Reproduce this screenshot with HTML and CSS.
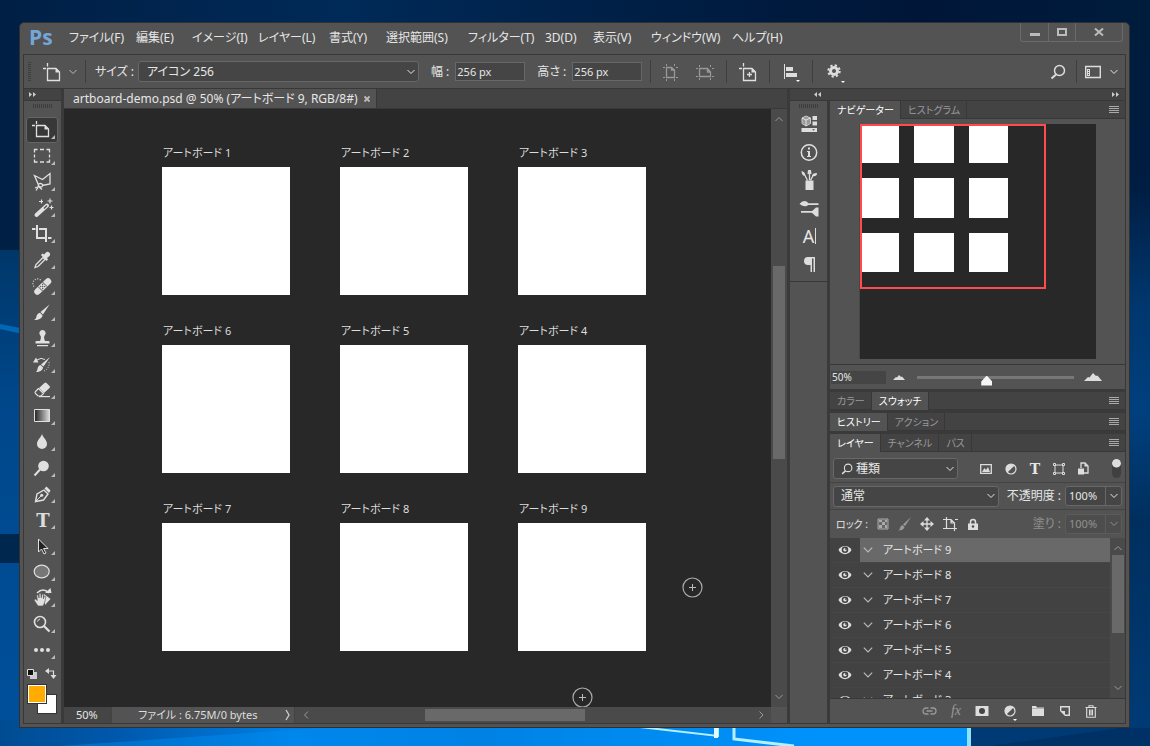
FILE: index.html
```html
<!DOCTYPE html>
<html lang="ja">
<head>
<meta charset="utf-8">
<title>artboard-demo.psd</title>
<link rel="stylesheet" href="styles.css">
</head>
<body>
<svg class="wallpaper" viewBox="0 0 1150 746" preserveAspectRatio="none" aria-hidden="true">
  <defs>
    <linearGradient id="w-top"><stop offset="0" stop-color="#001f45"/><stop offset=".3" stop-color="#002a58"/><stop offset=".6" stop-color="#001d42"/><stop offset=".8" stop-color="#001638"/><stop offset="1" stop-color="#001c3e"/></linearGradient>
    <linearGradient id="w-left" x2="0" y2="1"><stop offset="0" stop-color="#003769"/><stop offset=".3" stop-color="#00478a"/><stop offset="1" stop-color="#00509c"/></linearGradient>
    <linearGradient id="w-right" x2="0" y2="1"><stop offset="0" stop-color="#001c3c"/><stop offset=".25" stop-color="#001d42"/><stop offset=".4" stop-color="#00366c"/><stop offset=".55" stop-color="#00407e"/><stop offset=".7" stop-color="#002f5e"/><stop offset="1" stop-color="#003c78"/></linearGradient>
    <linearGradient id="w-bottom"><stop offset="0" stop-color="#004c92"/><stop offset=".12" stop-color="#0058ac"/><stop offset=".3" stop-color="#0080e4"/><stop offset=".5" stop-color="#0078d8"/><stop offset=".7" stop-color="#008af0"/><stop offset=".84" stop-color="#0092fc"/></linearGradient>
  </defs>
  <rect width="1150" height="746" fill="url(#w-top)"/>
  <rect y="250" width="100" height="496" fill="url(#w-left)"/>
  <path d="M0 324l40 8v6l-40-9z" fill="#0068b4"/>
  <rect y="534" width="30" height="29" fill="#00284f"/>
  <rect x="1100" width="50" height="746" fill="url(#w-right)"/>
  <rect y="720" width="970" height="26" fill="url(#w-bottom)"/>
  <path d="M60 746l260-18h340l60 12v6z" fill="#0090f8" opacity=".4"/>
  <path d="M640 727l78 9v-9" fill="none" stroke="#b4f0ff" stroke-width="2"/>
  <path d="M716 726v12" stroke="#e2fbff" stroke-width="4"/>
  <path d="M734 726v13l60 7" fill="none" stroke="#b4f0ff" stroke-width="3"/>
  <path d="M969 726v20" stroke="#8ee4ff" stroke-width="4"/>
  <path d="M971 726h179v20h-179z" fill="#003a74"/>
  <path d="M990 746l130-18h30v18z" fill="#002c5e" opacity=".6"/>
</svg>

<svg class="symbols" aria-hidden="true">
  <symbol id="chev-down" viewBox="0 0 10 10"><path d="M1.500 3l3.500 3.500 3.500-3.500" fill="none" stroke="currentColor"/></symbol>
  <symbol id="chev-up" viewBox="0 0 10 10"><path d="M1.500 7l3.500-3.500 3.500 3.500" fill="none" stroke="currentColor"/></symbol>
  <symbol id="chev-left" viewBox="0 0 10 10"><path d="M7 1.500l-3.500 3.500 3.500 3.500" fill="none" stroke="currentColor"/></symbol>
  <symbol id="chev-right" viewBox="0 0 10 10"><path d="M3.500 1.500l3.500 3.500-3.500 3.500" fill="none" stroke="currentColor"/></symbol>
  <symbol id="burger" viewBox="0 0 12 10"><path d="M1 1.500h10M1 3.500h10M1 5.500h10M1 7.500h10" stroke="#aaa" fill="none"/></symbol>
  <symbol id="eye" viewBox="0 0 14 10"><path d="M.5 5C3-.5 11-.5 13.500 5 11 10.500 3 10.500.5 5z" fill="#e0e0e0"/><circle cx="7" cy="4.800" r="3.300" fill="#424242"/><circle cx="7" cy="4.800" r="1.800" fill="#e0e0e0"/><circle cx="8" cy="4" r=".9" fill="#424242"/></symbol>
  <symbol id="board" viewBox="0 0 20 20"><path d="M5.500 1v3.500M1 6.500h3M5.500 6.500H14l3.500 3.500v8.500h-12z" fill="none" stroke="#e0e0e0" stroke-width="1.300"/><path d="M13.500 6l4.500 4.500h-4.500z" fill="#e0e0e0"/></symbol>
  <symbol id="half" viewBox="0 0 12 12"><circle cx="6" cy="6" r="5" fill="none" stroke="#ddd" stroke-width="1.200"/><path d="M9.600 2.400A5 5 0 0 0 2.400 9.600z" fill="#ddd"/></symbol>
  <symbol id="lens" viewBox="0 0 16 16"><circle cx="9.500" cy="6.500" r="5" fill="none" stroke="#ddd" stroke-width="1.500"/><path d="M6 10.500l-4.500 4" stroke="#ddd" stroke-width="2" fill="none"/></symbol>
  <symbol id="plus-ring" viewBox="0 0 22 22"><circle cx="11.500" cy="11.500" r="9.500" fill="none" stroke="#aaa" stroke-width="1.200"/><path d="M8 11.500h7M11.500 8v7" stroke="#bbb"/></symbol>
</svg>

<main class="window">
  <header class="titlebar">
    <span class="logo">Ps</span>
    <nav class="menus" aria-label="メニュー">
      <button>ファイル(F)</button><button>編集(E)</button><button>イメージ(I)</button><button>レイヤー(L)</button><button>書式(Y)</button><button>選択範囲(S)</button><button>フィルター(T)</button><button>3D(D)</button><button>表示(V)</button><button>ウィンドウ(W)</button><button>ヘルプ(H)</button>
    </nav>
    <div class="window-buttons">
      <button aria-label="最小化"><svg width="12" height="12"><path d="M1 8.500h10" stroke="#bbb" stroke-width="3"/></svg></button>
      <button aria-label="最大化"><svg width="12" height="12"><path d="M2 3h8v6H2z" fill="none" stroke="#bbb" stroke-width="2"/></svg></button>
      <button class="wide" aria-label="閉じる"><svg width="12" height="12"><path d="M2 2.500l8 7M10 2.500l-8 7" stroke="#bbb" stroke-width="2"/></svg></button>
    </div>
  </header>

  <div class="frame">
    <div class="options">
      <span class="grip-v"></span>
      <button class="opt-tool" aria-label="アートボードツール"><svg width="20" height="20"><use href="#board"/></svg><svg class="dim" width="10" height="10"><use href="#chev-down"/></svg></button>
      <span class="rule"></span>
      <label for="size" class="size-label">サイズ :</label>
      <span class="select size"><select id="size"><option>アイコン 256</option></select><svg width="10" height="10"><use href="#chev-down"/></svg></span>
      <label for="w" class="num-label">幅 :</label><input id="w" class="num" value="256 px">
      <label for="h" class="num-label">高さ :</label><input id="h" class="num" value="256 px">
      <span class="rule"></span>
      <button class="opt" aria-label="縦長"><svg width="18" height="18" fill="none" stroke="#999"><path d="M4.500 4v10.500h8V7l-3-2.500H4M9.500 4.500V7h3" stroke-width="1.300"/><path d="M4.500 1v2M12.500 1v2M4.500 16v2M12.500 16v2M1 4.500h2M14 4.500h2M1 14.500h2M14 14.500h2"/></svg></button>
      <button class="opt" aria-label="横長"><svg width="20" height="18" fill="none" stroke="#999"><path d="M4.500 5.500v8h11V9l-3-3.500H4M12.500 5.500V9h3" stroke-width="1.300"/><path d="M4.500 2v2M15.500 2v2M4.500 15v2M15.500 15v2M1 5.500h2M17 5.500h2M1 13.500h2M17 13.500h2"/></svg></button>
      <span class="rule"></span>
      <button class="opt" aria-label="新規アートボードを追加"><svg width="20" height="20"><use href="#board"/><path d="M9 12.500h5M11.500 10v5" stroke="#ddd" stroke-width="1.300"/></svg></button>
      <span class="rule"></span>
      <button class="opt" aria-label="整列"><svg width="20" height="20"><path d="M3.500 2v15" stroke="#ddd"/><path d="M5 5h7v4H5zM5 11h11v4H5z" fill="#ddd"/><path d="M15 18h4l-2 2z" fill="#fff"/></svg></button>
      <span class="rule"></span>
      <button class="opt gear" aria-label="設定"><svg width="22" height="22"><circle cx="9" cy="10" r="3.500" fill="none" stroke="#ddd" stroke-width="3"/><circle cx="9" cy="10" r="5.700" fill="none" stroke="#ddd" stroke-width="2" stroke-dasharray="2.240 2.240"/><path d="M16 20h4l-2 2z" fill="#fff"/></svg></button>
      <button class="opt search" aria-label="検索"><svg width="16" height="16"><use href="#lens"/></svg></button>
      <span class="rule"></span>
      <button class="opt space" aria-label="ワークスペース"><svg width="16" height="14"><path d="M.7 1.500h14.600v11H.7z" fill="none" stroke="#ddd" stroke-width="1.400"/><path d="M2 4h3v7H2z" fill="#ddd"/><path d="M3.500 5v5" stroke="#535353" stroke-dasharray="1 1"/></svg><svg width="10" height="10"><use href="#chev-down"/></svg></button>
    </div>

    <div class="work">
      <aside class="toolbox">
        <button class="dock-head" aria-label="展開"><svg width="9" height="7"><path d="M1 1l3 2.500L1 6zM5 1l3 2.500L5 6z" fill="#ccc"/></svg></button>
        <span class="grip-h"></span>
        <div class="tools">
          <button class="active" aria-label="アートボード"><svg viewBox="0 0 32 26"><path d="M10.500 4v3M6 8.500h3M10.500 8.500h8.500l3.500 3.500v7.500h-12z" fill="none" stroke="#e0e0e0" stroke-width="1.300"/><path d="M18.500 8l4.500 4.500h-4.500z"/></svg></button>
          <button aria-label="長方形選択"><svg viewBox="0 0 32 26"><path d="M8.500 9.500v-3h3M14 6.500h4M20.500 6.500h3v3M23.500 11.500v3M23.500 16.500v2.500h-3M18 19h-4M11.500 19h-3v-2.500M8.500 14.500v-3" fill="none" stroke="#e0e0e0" stroke-width="1.300"/></svg></button>
          <button aria-label="多角形選択"><svg viewBox="0 0 32 26"><path d="M12.500 16L8.500 6.500l8 4L24 4.500v10.500l-8 1.500M13 17.500a2 1.500 0 1 0 3-2.500 2 1.500 0 1 0-3 2.500M12 17l4 3.500M14 17l-5 2M12 18.500l-2 3" fill="none" stroke="#e0e0e0" stroke-width="1.300"/></svg></button>
          <button aria-label="自動選択"><svg viewBox="0 0 32 26"><path d="M10.500 20L21 10.500" stroke="#e0e0e0" stroke-width="4" stroke-linecap="round"/><path d="M18 13.500l3-3" stroke="#535353" stroke-width="1.500"/><path d="M13 6.500h4M15.500 4.500v4M21.500 6h5M24 3.500v5M23.500 12.500h4M25.500 10.500v4" stroke="#e0e0e0" stroke-width="1.200"/></svg></button>
          <button aria-label="切り抜き"><svg viewBox="0 0 32 26"><path d="M6 8h3.500M11 4v13h9M22 17h3.500M13 8h7v13" fill="none" stroke="#e0e0e0" stroke-width="2"/></svg></button>
          <button aria-label="スポイト"><svg viewBox="0 0 32 26"><path d="M9 20.500l1-3 7-7 2 2-7 7z" fill="none" stroke="#e0e0e0" stroke-width="1.300"/><path d="M15 8l1.500-1.500 1.500 1L20 5.500c2-2 5.500 1 3.500 3.500l-2.500 2 1 1.500-1.500 1.500z"/></svg></button>
          <button aria-label="修復ブラシ"><svg viewBox="0 0 32 26"><path d="M11.500 18.500L22 8.500" stroke="#e0e0e0" stroke-width="6.500" stroke-linecap="round"/><path d="M12 13.500l4.500 4.500M16.500 9l4.500 4.500" stroke="#535353"/><path d="M14.700 13.500h.01M16.700 15.500h.01M16.700 11.500h.01M18.700 13.500h.01M16.700 13.500h.01" stroke="#535353" stroke-width="1.400" stroke-linecap="round"/><path d="M8 13.500a4.500 4.500 0 1 1 7-6" fill="none" stroke="#e0e0e0" stroke-width="1.200" stroke-dasharray="1 1.500"/></svg></button>
          <button aria-label="ブラシ"><svg viewBox="0 0 32 26"><path d="M23.500 5.500l-6.500 10-2.500-2.500zM14 13.700l2.500 2.500c0 3-4 5-8.500 4.800 2.500-1.500 2-2.500 3-5 .8-1.500 2-2 3-2.300z"/></svg></button>
          <button aria-label="スタンプ"><svg viewBox="0 0 32 26"><path d="M16.500 5a3.200 3.200 0 0 1 2.200 5.500c-1 1-.7 3 .3 5.500h3.500q1 0 1 1v1.500h-14V17q0-1 1-1H14c1-2.500 1.300-4.500.3-5.500A3.200 3.200 0 0 1 16.500 5zM11 20h11v1.200H11z"/></svg></button>
          <button aria-label="ヒストリーブラシ"><svg viewBox="0 0 32 26"><path d="M24 6l-6.500 9.500-2.500-2zM14.500 14l2.500 2.200c0 3-3 4.800-7 4.800 2-2 1-2.500 2-4.800.5-1.200 1.500-2 2.500-2.200zM7 11.500l3-5 2.500 5z"/><path d="M11 9q4-3 8-.5" fill="none" stroke="#e0e0e0"/><path d="M23 11q1 6-5 9" fill="none" stroke="#e0e0e0" stroke-dasharray="1 1.500"/></svg></button>
          <button aria-label="消しゴム"><svg viewBox="0 0 32 26"><path d="M13 11l5.500-5q1-1 2 0l3 3q1 1 0 2L18 16z"/><path d="M12.500 11.500l-3 3q-1 1 0 2l2.500 2.500h3l2.500-2.500z" fill="none" stroke="#e0e0e0" stroke-width="1.200"/><path d="M13 19h11v1.200H13z"/></svg></button>
          <button aria-label="グラデーション"><svg viewBox="0 0 32 26"><defs><linearGradient id="gr"><stop stop-color="#222"/><stop offset="1" stop-color="#ddd"/></linearGradient></defs><path d="M8.500 6.500h15v12h-15z" fill="url(#gr)" stroke="#e0e0e0"/></svg></button>
          <button aria-label="ぼかし"><svg viewBox="0 0 32 26"><path d="M16 5c1 3.500 5 6 5 10a5 5 0 0 1-10 0c0-4 4-6.500 5-10z"/></svg></button>
          <button aria-label="覆い焼き"><svg viewBox="0 0 32 26"><circle cx="17.500" cy="11" r="5.300"/><path d="M14 14.500l-5.500 6" stroke="#e0e0e0" stroke-width="2"/></svg></button>
          <button aria-label="ペン"><svg viewBox="0 0 32 26"><path d="M9.500 20.500l1.500-7.500 7-4 4 4-4.500 6z" fill="none" stroke="#e0e0e0" stroke-width="1.400"/><path d="M9.500 20.500l6-6" stroke="#e0e0e0"/><circle cx="15.700" cy="14.300" r="1.500"/><path d="M18.500 7.500l2-2 4 4-1.500 2.500z"/></svg></button>
          <button aria-label="文字"><svg viewBox="0 0 32 26"><text class="serif" x="17" y="20" text-anchor="middle" font-size="18">T</text></svg></button>
          <button aria-label="パス選択"><svg viewBox="0 0 32 26"><path d="M12.500 6v13l3-3 2.500 5 2-1-2.500-4.500h4.500z" fill="#222" stroke="#e0e0e0"/></svg></button>
          <button aria-label="楕円形"><svg viewBox="0 0 32 26"><ellipse cx="15.700" cy="12.500" rx="7.500" ry="6.300" fill="#777" stroke="#e0e0e0" stroke-width="1.200"/></svg></button>
          <button aria-label="回転ビュー"><svg viewBox="0 0 32 26"><path d="M11 8q6-6 12 0" fill="none" stroke="#e0e0e0" stroke-width="1.500"/><path d="M19 8h6.500l-1-5zM18 9l6.500 5-5.500 6z"/><path d="M12 21l-4-6 1.500-1 1.800 1.500-.6-5.500 1.500-.3.900 3.300V8.500l1.700-.2.400 4.500 1-4 1.400.4-.3 4.600 1.300-2.800 1.300.5-1.200 6-1.700 3.500z" stroke="#535353" stroke-width=".6"/></svg></button>
          <button aria-label="ズーム"><svg viewBox="0 0 32 26"><circle cx="14" cy="11" r="5.500" fill="none" stroke="#e0e0e0" stroke-width="1.600"/><path d="M11.500 10.500q.5-2 2.500-2.500" fill="none" stroke="#e0e0e0"/><path d="M18 15l5.500 5.500" stroke="#e0e0e0" stroke-width="2.200"/></svg></button>
          <button aria-label="その他"><svg viewBox="0 0 32 26"><circle cx="10" cy="13" r="2"/><circle cx="16" cy="13" r="2"/><circle cx="22" cy="13" r="2"/></svg></button>
        </div>
        <div class="swatch-tools">
          <button aria-label="初期設定の色"><svg width="10" height="10"><path d="M3 3h7v7H3z" fill="#ccc"/><path d="M.5.5h6v6h-6z" fill="#111" stroke="#ddd"/></svg></button>
          <button aria-label="色を入れ替え"><svg width="12" height="11"><path d="M3 3h5.500v5" fill="none" stroke="#ddd" stroke-width="1.200"/><path d="M4 0v6L0 3zM5.500 7h6l-3 4z" fill="#ddd"/></svg></button>
        </div>
        <div class="colors"><button class="bg" aria-label="背景色"></button><button class="fg" aria-label="描画色"></button></div>
      </aside>

      <section class="document">
        <div class="doc-tabs"><div class="doc-tab"><span>artboard-demo.psd @ 50% (アートボード 9, RGB/8#)</span><button aria-label="閉じる"><svg width="8" height="8"><path d="M1.500 1.500l5 5M6.500 1.500l-5 5" stroke="#bbb" stroke-width="1.800"/></svg></button></div></div>
        <div class="view">
          <div class="canvas">
            <figure><figcaption>アートボード 1</figcaption><div></div></figure>
            <figure><figcaption>アートボード 2</figcaption><div></div></figure>
            <figure><figcaption>アートボード 3</figcaption><div></div></figure>
            <figure><figcaption>アートボード 6</figcaption><div></div></figure>
            <figure><figcaption>アートボード 5</figcaption><div></div></figure>
            <figure><figcaption>アートボード 4</figcaption><div></div></figure>
            <figure><figcaption>アートボード 7</figcaption><div></div></figure>
            <figure><figcaption>アートボード 8</figcaption><div></div></figure>
            <figure><figcaption>アートボード 9</figcaption><div></div></figure>
            <button class="add add-right" aria-label="右に追加"><svg width="22" height="22"><use href="#plus-ring"/></svg></button>
            <button class="add add-below" aria-label="下に追加"><svg width="22" height="22"><use href="#plus-ring"/></svg></button>
          </div>
          <div class="scroll-v"><svg width="10" height="10"><use href="#chev-up"/></svg><span class="track"><i></i></span><svg width="10" height="10"><use href="#chev-down"/></svg></div>
        </div>
        <footer class="status">
          <input class="status-zoom" aria-label="ズーム" value="50%">
          <button class="status-info"><span>ファイル : 6.75M/0 bytes</span><svg width="10" height="12"><path d="M3 1l3 5-3 5" fill="none" stroke="#ccc" stroke-width="1.300"/></svg></button>
          <div class="scroll-h"><svg width="10" height="10"><use href="#chev-left"/></svg><span class="track"><i></i></span><svg width="10" height="10"><use href="#chev-right"/></svg></div>
          <span class="corner"></span>
        </footer>
      </section>

      <section class="dock">
        <div class="dock-bar">
          <button aria-label="パネルを展開"><svg width="9" height="7"><path d="M4 1L1 3.500 4 6zM8 1L5 3.500 8 6z" fill="#ccc"/></svg></button>
          <button aria-label="アイコン化"><svg width="9" height="7"><path d="M1 1l3 2.500L1 6zM5 1l3 2.500L5 6z" fill="#ccc"/></svg></button>
        </div>
        <div class="dock-body">
          <aside class="strip">
            <span class="grip-h"></span>
            <div class="strip-icons">
              <button aria-label="ライブラリ"><svg viewBox="0 0 28 28"><path d="M6 8l4-2 4.500 2v5.500L10 16l-4-2.500z" fill="#999" stroke="#ccc"/><path d="M6 8l4 2 4.500-2M10 10v6" fill="none" stroke="#e0e0e0"/><path d="M16.500 6h4.500v4h-4.500zM16.500 11.500h4.500v4h-4.500zM5.500 18h15.500v4H5.500z"/><path d="M16 19.300h3l-1.500 1.500z" fill="#535353"/></svg></button>
              <button aria-label="情報"><svg viewBox="0 0 28 28"><circle cx="13" cy="14.500" r="7.700" fill="none" stroke="#e0e0e0" stroke-width="1.500"/><path d="M12 9.500h2v2h-2zM11 13h3v5h1v1h-4v-1h1v-4h-1z"/></svg></button>
              <button aria-label="ブラシプリセット"><svg viewBox="0 0 28 28"><path d="M9.500 14.500h8V24h-8zM5.500 5q4 1 4 5-4 0-4-5zM12 4h3l.5 4h-4zM16 10q0-3 5-3 0 4-5 3z"/><path d="M9 9.500l2.500 5M13.500 8v6M17 9.500l-2.500 5" stroke="#e0e0e0" stroke-width="1.300"/></svg></button>
              <button aria-label="ブラシ設定"><svg viewBox="0 0 28 28"><path d="M3.500 10q3-4 7-2.500 2 1 2 2.500t-2 2q-3 1-7-2z"/><path d="M12 9.200h10.500v1.700H12zM5 17h11v1.700H5zM15 18l5-4.500h2.500v9H20z"/></svg></button>
              <button class="letter" aria-label="文字パネル"><span>A</span><svg width="3" height="16"><path d="M1.500 0v16" stroke="#ddd"/></svg></button>
              <button aria-label="段落"><svg viewBox="0 0 28 28"><path d="M12 7h7v15h-1.500V8.500H16V22h-1.500v-7H12a4 4 0 0 1 0-8z"/></svg></button>
            </div>
          </aside>

          <div class="panels">
            <section class="panel navigator">
              <div class="tabs"><button class="on">ナビゲーター</button><button>ヒストグラム</button><button class="burger" aria-label="メニュー"><svg width="12" height="10"><use href="#burger"/></svg></button></div>
              <div class="nav-view">
                <svg viewBox="0 0 236 235" role="img" aria-label="ナビゲーター"><path d="M0 0h236v235H0z" fill="#282828"/><path d="M2 2h37v37H2zM54 2h40v37H54zM109 2h39v37h-39zM2 54h37v40H2zM54 54h40v40H54zM109 54h39v40h-39zM2 109h37v39H2zM54 109h40v39H54zM109 109h39v39h-39z" fill="#fff"/><path d="M1 1h184v163H1z" fill="none" stroke="#ff4b4b" stroke-width="2"/></svg>
              </div>
              <div class="nav-zoom">
                <input class="nav-value" aria-label="表示倍率" value="50%">
                <svg width="12" height="8"><path d="M0 7l3-3 1 .5L6 2l2 2 1-.5L12 7z" fill="#ddd"/></svg>
                <input type="range" min="0" max="100" value="44" aria-label="ズームスライダー">
                <svg width="18" height="10"><path d="M0 9l4-4 1.500.5L9 1l3 3 1.500-.5L18 9z" fill="#ddd"/></svg>
              </div>
            </section>
            <section class="panel"><div class="tabs"><button>カラー</button><button class="on">スウォッチ</button><button class="burger" aria-label="メニュー"><svg width="12" height="10"><use href="#burger"/></svg></button></div></section>
            <section class="panel"><div class="tabs"><button class="on">ヒストリー</button><button>アクション</button><button class="burger" aria-label="メニュー"><svg width="12" height="10"><use href="#burger"/></svg></button></div></section>
            <section class="panel layers">
              <div class="tabs"><button class="on">レイヤー</button><button>チャンネル</button><button>パス</button><button class="burger" aria-label="メニュー"><svg width="12" height="10"><use href="#burger"/></svg></button></div>
              <div class="row filter-row">
                <span class="select kind"><svg class="lead" width="12" height="12"><use href="#lens"/></svg><select aria-label="種類"><option>種類</option></select><svg width="10" height="10"><use href="#chev-down"/></svg></span>
                <div class="filters">
                  <button aria-label="ピクセル"><svg width="14" height="12"><path d="M1.700 1.700h10.600v8.600H1.700z" fill="none" stroke="#ddd" stroke-width="1.300"/><path d="M3 9l2.500-4L7 7l2-3 2 5z" fill="#ddd"/></svg></button>
                  <button aria-label="調整"><svg width="12" height="12"><use href="#half"/></svg></button>
                  <button class="type-filter serif" aria-label="テキスト">T</button>
                  <button aria-label="シェイプ"><svg width="12" height="12" fill="none" stroke="#ddd"><path d="M2 2h8v8H2z"/><path d="M.5.5h2v2h-2zM9.500.5h2v2h-2zM.5 9.500h2v2h-2zM9.500 9.500h2v2h-2z" fill="#535353"/></svg></button>
                  <button aria-label="スマートオブジェクト"><svg width="12" height="13"><path d="M4 6V1h4l3 3v7H7" fill="none" stroke="#ddd" stroke-width="1.300"/><path d="M7.500 1v3.500H11zM1 6.500h6v6H1z" fill="#ddd"/></svg></button>
                </div>
                <label class="switch"><input type="checkbox" aria-label="フィルター" checked></label>
              </div>
              <div class="row">
                <span class="select blend"><select aria-label="描画モード"><option>通常</option></select><svg width="10" height="10"><use href="#chev-down"/></svg></span>
                <label for="op" class="end">不透明度 :</label>
                <span class="combo"><input id="op" value="100%"><button aria-label="不透明度"><svg width="10" height="10"><use href="#chev-down"/></svg></button></span>
              </div>
              <div class="row lock-row">
                <span class="lock-label">ロック :</span>
                <button aria-label="透明ピクセル"><svg width="12" height="12"><path d="M1 1h10v10H1z" fill="#666" stroke="#aaa"/><path d="M2 2h3v2H2zM8 2h2v2H8zM5 4h3v3H5zM2 7h3v3H2zM8 7h2v3H8z" fill="#aaa"/></svg></button>
                <button aria-label="画像ピクセル"><svg width="13" height="14"><path d="M13 0L7 9 5 7.500zM4.500 8l2 2c-.5 2.500-3 3.500-6 3.500C2 12 2 11 2.500 9.500z" fill="#999"/></svg></button>
                <button aria-label="位置"><svg width="14" height="14"><path d="M7 2v10M2 7h10" stroke="#ddd" stroke-width="1.300"/><path d="M7 0l3 3.500H4zM7 14l3-3.500H4zM0 7l3.500-3v6zM14 7l-3.500-3v6z" fill="#ddd"/></svg></button>
                <button aria-label="自動ネスト"><svg width="15" height="14" fill="none" stroke="#ddd"><path d="M3.500 2.500v9h8V6L8 2.500zM8 2.500V6h3.500M3.500 0v2M0 2.500h3M12 2.500h3M0 11.500h3M11.500 12v2M12 11.500h2" stroke-width="1.200"/></svg></button>
                <button aria-label="すべて"><svg width="12" height="13"><path d="M3.500 6V4a2.500 2.500 0 0 1 5 0v2" fill="none" stroke="#ddd" stroke-width="1.500"/><path d="M1 5.500h10V12H1z" fill="#ddd"/><circle cx="6" cy="8.500" r="1.200" fill="#444"/></svg></button>
                <label for="fill" class="end disabled">塗り :</label>
                <span class="combo disabled"><input id="fill" value="100%" disabled><button disabled aria-label="塗り"><svg width="10" height="10"><use href="#chev-down"/></svg></button></span>
              </div>
              <div class="layer-view">
                <ul class="layer-list">
                  <li class="selected"><button aria-label="表示"><svg width="14" height="10"><use href="#eye"/></svg></button><span class="layer"><svg width="12" height="12"><use href="#chev-down"/></svg>アートボード 9</span></li>
                  <li><button aria-label="表示"><svg width="14" height="10"><use href="#eye"/></svg></button><span class="layer"><svg width="12" height="12"><use href="#chev-down"/></svg>アートボード 8</span></li>
                  <li><button aria-label="表示"><svg width="14" height="10"><use href="#eye"/></svg></button><span class="layer"><svg width="12" height="12"><use href="#chev-down"/></svg>アートボード 7</span></li>
                  <li><button aria-label="表示"><svg width="14" height="10"><use href="#eye"/></svg></button><span class="layer"><svg width="12" height="12"><use href="#chev-down"/></svg>アートボード 6</span></li>
                  <li><button aria-label="表示"><svg width="14" height="10"><use href="#eye"/></svg></button><span class="layer"><svg width="12" height="12"><use href="#chev-down"/></svg>アートボード 5</span></li>
                  <li><button aria-label="表示"><svg width="14" height="10"><use href="#eye"/></svg></button><span class="layer"><svg width="12" height="12"><use href="#chev-down"/></svg>アートボード 4</span></li>
                  <li><button aria-label="表示"><svg width="14" height="10"><use href="#eye"/></svg></button><span class="layer"><svg width="12" height="12"><use href="#chev-down"/></svg>アートボード 3</span></li>
                </ul>
                <div class="scroll-v"><svg width="10" height="10"><use href="#chev-up"/></svg><span class="track"><i></i></span><svg width="10" height="10"><use href="#chev-down"/></svg></div>
              </div>
              <div class="layer-actions">
                <button aria-label="リンク"><svg width="15" height="10" fill="none" stroke="#999" stroke-width="1.300"><path d="M6.500 2H4a3 3 0 0 0 0 6h2.500M8.500 2H11a3 3 0 0 1 0 6H8.500M4.500 5h6"/></svg></button>
                <button class="fx">fx</button>
                <button aria-label="マスク"><svg width="14" height="12"><path d="M.5 1h13v10H.5z" fill="#ddd"/><circle cx="7" cy="6" r="3" fill="#444"/></svg></button>
                <button class="adjust" aria-label="調整レイヤー"><svg width="14" height="20"><use href="#half" x="1" y="4" width="12" height="12"/><path d="M10 18h4l-2 2z" fill="#fff"/></svg></button>
                <button aria-label="グループ"><svg width="14" height="12"><path d="M1 1h4l1 1.500h7V11H1z" fill="#ddd"/><path d="M1 3.500h12" stroke="#888" stroke-width=".5"/></svg></button>
                <button aria-label="新規"><svg width="12" height="12"><path d="M1.700 6V1.700h8.600v8.600H6" fill="none" stroke="#ddd" stroke-width="1.400"/><path d="M1 6h5v5z" fill="#ddd"/></svg></button>
                <button aria-label="削除"><svg width="12" height="13" fill="none" stroke="#ddd"><path d="M.5 2.500h11M4 2V.7h4V2M1.700 3v9.300h8.600V3M4.500 4.500v6M6 4.500v6M7.500 4.500v6" stroke-width="1.100"/></svg></button>
              </div>
            </section>
          </div>
        </div>
      </section>
    </div>
  </div>
</main>
</body>
</html>
```
FILE: styles.css
```css
* { box-sizing: border-box; }

body {
  margin: 0;
  height: 100vh;
  padding: 22px 20px 18px 19px;
  overflow: hidden;
  background: #001f45;
  color: #e6e6e6;
  font: 12px/16px "Noto Sans", "Noto Sans CJK JP", sans-serif;
  font-feature-settings: "palt";
}

.wallpaper {
  position: absolute;
  inset: 0;
  width: 100%;
  height: 100%;
  z-index: -1;
}

.symbols { position: absolute; width: 0; height: 0; }

svg { display: block; flex: none; }
.serif { font-family: "DejaVu Serif", serif; font-weight: bold; fill: #ddd; }

button, input, select {
  margin: 0;
  padding: 0;
  border: 0;
  border-radius: 0;
  background: none;
  color: inherit;
  font: inherit;
  font-feature-settings: inherit;
  white-space: nowrap;
  outline: 0;
}

button { display: flex; align-items: center; justify-content: center; }

.window {
  display: flex;
  flex-direction: column;
  height: 100%;
  padding: 0 3px 3px;
  border: 1px solid #303030;
  border-radius: 5px 5px 0 0;
  background: #535353;
}

/* title bar */
.titlebar { display: flex; height: 31px; flex: none; }
.logo {
  width: 46px;
  padding: 0 0 0 6px;
  color: #75a6d8;
  font: bold 21px/29px "Open Sans", sans-serif;
}
.menus {
  display: grid;
  grid-template-columns: 67px 56px 66px 71px 57px 82px 77px 48px 58px 81px auto;
  height: 30px;
  font-size: 12px;
}
.menus button { justify-content: flex-start; }
.window-buttons {
  display: flex;
  height: 19px;
  margin: 0 3px 0 auto;
  border: 1px solid #6a6a6a;
  border-top: 0;
  border-radius: 0 0 3px 3px;
}
.window-buttons button { width: 27px; }
.window-buttons button + button { border-left: 1px solid #6a6a6a; }
.window-buttons .wide { width: 47px; }

.frame {
  display: flex;
  flex-direction: column;
  flex: 1;
  min-height: 0;
  border: 1px solid #383838;
}

/* options bar */
.options {
  display: flex;
  align-items: center;
  flex: none;
  height: 34px;
  padding: 0 6px 0 4px;
  border-bottom: 1px solid #383838;
}
.grip-v {
  width: 3px;
  height: 19px;
  background: repeating-linear-gradient(#3d3d3d 0 1px, #535353 1px 2px);
}
.opt-tool { gap: 6px; margin: 0 7px 0 11px; color: #bbb; }
.rule { width: 1px; height: 23px; background: #3e3e3e; }
.size-label { margin: 0 4px 0 9px; }
.select {
  position: relative;
  display: flex;
  align-items: center;
  height: 21px;
  padding-right: 2px;
  border: 1px solid #686868;
  border-radius: 3px;
  background: #454545;
}
.select select { flex: 1; min-width: 0; height: 100%; padding-left: 8px; appearance: none; }
.size { flex: 0 1 281px; }
.num-label { margin: 0 6px 0 12px; }
.num {
  width: 70px;
  height: 19px;
  padding: 0 1px;
  border: 1px solid #686868;
  background: #454545;
  font-size: 11px;
}
.num + .rule { margin-left: 8px; }
.opt { margin: 0 11px; }
.opt + .opt { margin-left: 4px; }
.options .gear { margin: 0 0 0 12px; }
.options .search { margin: 0 10px 0 auto; }
.options .space { gap: 8px; margin: 0 0 0 8px; }

.work {
  display: grid;
  grid-template-columns: 37px minmax(0, 1fr) 335px;
  grid-template-rows: minmax(0, 1fr);
  gap: 3px;
  flex: 1;
  min-height: 0;
  background: #3a3a3a;
}

/* toolbox */
.toolbox { display: flex; flex-direction: column; background: #535353; }
.dock-head {
  justify-content: flex-start;
  flex: none;
  height: 12px;
  padding-left: 4px;
  border-bottom: 1px solid #383838;
  background: #434343;
}
.grip-h {
  flex: none;
  width: 19px;
  height: 4px;
  margin: 3px auto 9px;
  background: repeating-linear-gradient(90deg, #3d3d3d 0 1px, #535353 1px 2px);
}
.tools { display: flex; flex-direction: column; padding-left: 2px; }
.tools button { position: relative; width: 32px; height: 26px; border-radius: 3px; }
.tools svg { width: 32px; height: 26px; fill: #e0e0e0; }
.tools button::after {
  content: "";
  position: absolute;
  right: 3px;
  bottom: 4px;
  width: 4px;
  height: 4px;
  background: #bbb;
  clip-path: polygon(100% 0, 100% 100%, 0 100%);
}
.tools .active { background: #383838; box-shadow: inset 0 0 0 1px #656565; }
.swatch-tools { display: flex; gap: 8px; padding: 5px 0 4px 3px; }
.colors { position: relative; height: 34px; margin-left: 3px; }
.colors button {
  position: absolute;
  width: 20px;
  height: 20px;
  border: 1px solid #333;
  background: #fff;
}
.colors .bg { left: 10px; top: 11px; }
.colors .fg { left: 0; top: 1px; background: #ffab00; box-shadow: inset 0 0 0 1px #fff; }

/* document */
.document { display: flex; flex-direction: column; min-width: 0; }
.doc-tabs {
  display: flex;
  flex: none;
  height: 20px;
  border-bottom: 1px solid #383838;
  background: #434343;
}
.doc-tab {
  display: flex;
  align-items: center;
  gap: 5px;
  padding: 0 5px 0 9px;
  border-right: 1px solid #383838;
  background: #535353;
}
.view { display: flex; flex: 1; min-height: 0; }
.canvas {
  position: relative;
  display: grid;
  grid-template-columns: repeat(3, 128px);
  align-content: start;
  gap: 26px 50px;
  flex: 1;
  min-width: 0;
  padding: 34px 0 0 98px;
  overflow: hidden;
  background: #282828;
}
figure { margin: 0; }
figcaption { height: 24px; padding-left: 1px; color: #ddd; font-size: 11px; line-height: 20px; }
figure div { height: 128px; background: #fff; }
.add { position: absolute; }
.add-right { left: 617px; top: 467px; }
.add-below { left: 507px; top: 577px; }

.scroll-v {
  display: flex;
  flex-direction: column;
  align-items: center;
  flex: none;
  width: 16px;
  padding: 5px 0;
  background: #4a4a4a;
  color: #999;
}
.track { display: flex; flex: 1; }
.scroll-v .track { flex-direction: column; width: 12px; }
.track i { background: #696969; }
.view .track i { height: 34%; margin-top: 142px; }

.status { display: flex; flex: none; height: 16px; background: #4a4a4a; font-size: 11px; }
.status-zoom { width: 47px; padding-left: 12px; background: #454545; }
.status-info {
  justify-content: space-between;
  width: 184px;
  padding: 0 1px 0 26px;
  border: solid #434343;
  border-width: 0 1px;
  background: #535353;
  color: #ddd;
}
.scroll-h { display: flex; align-items: center; flex: 1; padding: 0 5px 0 6px; color: #999; }
.scroll-h .track { height: 12px; }
.scroll-h i { width: 36%; margin-left: 114px; }
.corner { width: 16px; background: #535353; }

/* dock */
.dock { display: flex; flex-direction: column; min-width: 0; }
.dock-bar {
  display: flex;
  align-items: center;
  justify-content: space-between;
  flex: none;
  height: 12px;
  padding: 0 5px 0 23px;
  border-bottom: 1px solid #383838;
  background: #434343;
}
.dock-body {
  display: grid;
  grid-template-columns: 37px minmax(0, 1fr);
  grid-template-rows: minmax(0, 1fr);
  gap: 3px;
  flex: 1;
  min-height: 0;
}
.strip { background: #535353; }
.strip .grip-h { display: block; margin: 3px auto 0; }
.strip-icons { display: flex; flex-direction: column; padding: 2px 0 3px 6px; border-bottom: 1px solid #383838; }
.strip-icons button { width: 28px; height: 28px; }
.strip-icons svg { width: 28px; fill: #ddd; }
.strip-icons .letter { font-size: 18px; }
.strip-icons .letter svg { width: 3px; }

.panels { display: flex; flex-direction: column; gap: 3px; min-width: 0; }
.panel { background: #535353; }
.tabs {
  display: flex;
  height: 18px;
  border-bottom: 1px solid #383838;
  background: #434343;
  color: #999;
  font-size: 10px;
}
.tabs button { padding: 0 6px 0 7px; border-right: 1px solid #383838; }
.tabs .on { height: 18px; background: #535353; color: #fff; }
.tabs .burger { margin-left: auto; padding: 0 5px; border: 0; }

.nav-view { padding: 5px 29px; }
.nav-view svg { width: 100%; border: solid #474747; border-width: 0 0 0 1px; }
.nav-zoom {
  display: flex;
  align-items: center;
  height: 25px;
  padding-left: 1px;
  border-top: 1px solid #383838;
}
.nav-value { width: 55px; height: 13px; margin-right: 7px; padding-left: 1px; background: #454545; font-size: 10px; line-height: 13px; }
.nav-zoom input[type="range"] {
  flex: 1;
  min-width: 0;
  height: 16px;
  margin: 0 10px 0 12px;
  appearance: none;
}
.nav-zoom input::-webkit-slider-runnable-track { height: 3px; background: #777; }
.nav-zoom input::-webkit-slider-thumb {
  appearance: none;
  width: 11px;
  height: 10px;
  background: #f5f5f5;
  clip-path: polygon(50% 0, 100% 60%, 100% 100%, 0 100%, 0 60%);
}
.nav-zoom svg:last-child { margin-right: 23px; }

.layers { display: flex; flex-direction: column; flex: 1; min-height: 0; }
.row {
  display: flex;
  align-items: center;
  flex: none;
  height: 27px;
  padding: 0 3px;
  border-top: 1px solid #444;
}
.filter-row { height: 30px; padding-top: 3px; border: 0; }
.kind { width: 125px; }
.kind .lead { margin-left: 7px; }
.select.kind select { padding-left: 3px; }
.filters { display: flex; align-items: center; gap: 12px; margin-left: 21px; }
.type-filter { width: 12px; font-size: 14px; line-height: 18px; }
.switch { margin-left: auto; }
.switch input {
  display: block;
  width: 9px;
  height: 19px;
  margin-right: 1px;
  appearance: none;
  border-radius: 5px;
  background: radial-gradient(circle at 50% 4px, #ddd 4px, #404040 5px);
}
.blend { width: 166px; }
.select.blend select { padding-left: 7px; }
.end { margin: 0 4px 0 auto; }
.combo {
  display: flex;
  width: 57px;
  height: 20px;
  border: 1px solid #686868;
  border-radius: 3px;
  background: #454545;
}
.combo input { width: 39px; padding-left: 3px; font-size: 11px; }
.combo button { flex: 1; border-left: 1px solid #686868; }
.disabled { opacity: 0.4; }
.lock-row { height: 29px; gap: 9px; }
.lock-label { margin-left: 3px; font-size: 10px; }
.lock-row .end { margin-right: 0; }
.lock-row .combo { margin-left: -5px; }

.layer-view { display: flex; flex: 1; min-height: 0; background: #424242; }
.layer-list { flex: 1; margin: 0; padding: 0; overflow: hidden; list-style: none; }
.layer-list li { display: flex; height: 25px; border-bottom: 1px solid #464646; }
.layer-list button { width: 30px; }
.layer { display: flex; align-items: center; gap: 9px; flex: 1; padding-left: 2px; font-size: 11px; }
.layer svg { color: #bbb; }
.selected .layer { background: #696969; }
.layer-view .scroll-v { width: 15px; }
.layer-view .track i { height: 60%; margin-top: 2px; }

.layer-actions {
  display: flex;
  align-items: center;
  justify-content: flex-end;
  gap: 14px;
  flex: none;
  height: 25px;
  padding-right: 28px;
  border-top: 1px solid #383838;
}
.fx { color: #999; font: italic 14px/16px "Liberation Serif", serif; }
```
